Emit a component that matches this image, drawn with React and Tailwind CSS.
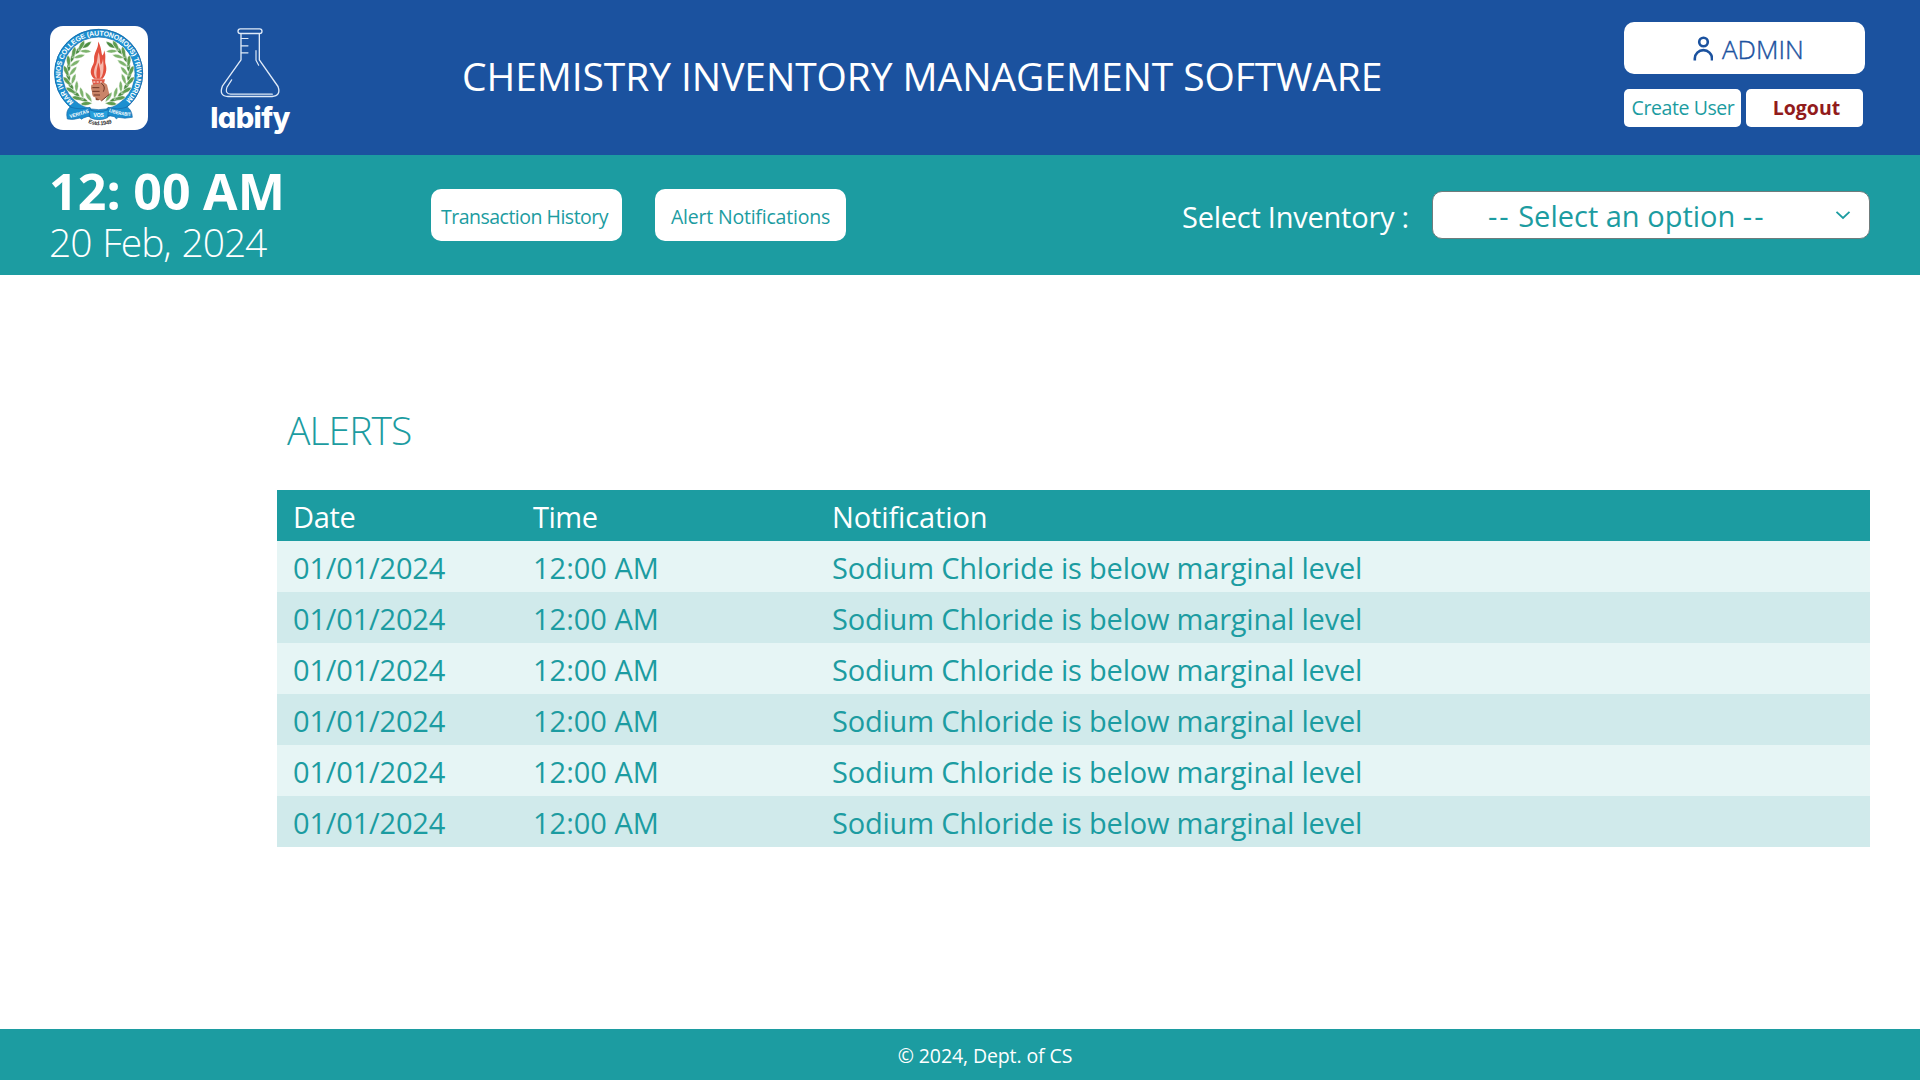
import React from "react";

const leafAngles = [22, 40, 58, 76, 94, 112, 130, 148];

function Leaf({ angle, side }) {
  return (
    <g transform={`rotate(${side * angle} 176 175) translate(176 265) scale(${side * 1.15} 1.15)`} fill="#5f9c50" stroke="#fff" strokeWidth="1">
      <path d="M12 -2 Q2 -20 -14 -20 Q-8 -4 12 -2 Z" fill="#7db36d" />
      <path d="M14 0 Q0 18 -14 14 Q-8 -2 14 0 Z" />
      <path d="M2 0 Q-14 -10 -28 2 Q-14 10 2 0 Z" fill="#4c8c42" />
    </g>
  );
}

function CollegeCrest() {
  return (
    <svg viewBox="30 33 294 312" className="h-[104px] w-[98px]">
      <defs>
        <path id="ring" d="M 97 266 A 120 120 0 1 1 257 264" />
        <path id="ribbonLeft" d="M 90 309 Q 118 303 150 291" />
        <path id="ribbonRight" d="M 206 290 Q 240 303 276 303" />
        <path id="estd" d="M 144 324 Q 180 338 220 323" />
      </defs>
      <circle cx="176" cy="175" r="133" fill="#1c8fd0" />
      <circle cx="176" cy="175" r="132" fill="none" stroke="#1b6fae" strokeWidth="3" />
      <circle cx="176" cy="175" r="109" fill="#fff" stroke="#1b6fae" strokeWidth="2" />
      {leafAngles.map((a) => (
        <React.Fragment key={a}>
          <Leaf angle={a} side={1} />
          <Leaf angle={a} side={-1} />
        </React.Fragment>
      ))}
      <text className="font-['Liberation_Sans'] font-bold" fontSize="21" fill="#fff" dy="6">
        <textPath href="#ring" textLength="572" lengthAdjust="spacing">
          MAR IVANIOS COLLEGE (AUTONOMOUS) TRIVANDRUM
        </textPath>
      </text>
      <path d="M164 210 L167 254 Q173 258 179 254 L184 210 Z" fill="#8a4a33" />
      <path d="M155 193 H195 L190 212 H160 Z" fill="#e05a48" />
      <path d="M160 201 H190" stroke="#fff" strokeWidth="3" strokeDasharray="6 4" />
      <g transform="translate(0 38.2) scale(1 0.8)">
        <path
          d="M162 191 C146 172 153 152 160 136 C165 122 160 112 164 100 C168 84 176 72 174 52 C184 70 183 90 187 104 C192 98 192 90 192 84 C200 104 193 122 197 138 C202 158 197 178 188 191 Z"
          fill="#e3513f"
        />
        <path d="M167 188 C158 170 163 152 169 136 C173 120 172 106 176 92 C181 112 179 126 182 140 C188 130 188 122 189 116 C191 140 193 166 183 188 Z" fill="#f6b9ad" />
        <path d="M171 189 C167 170 171 152 175 130 C181 154 183 170 179 189 Z" fill="#e3513f" />
      </g>
      <path d="M154 209 Q150 220 156 230 Q155 246 166 247 L184 258 L208 238 L201 209 Q190 198 176 206 Z" fill="#c98468" />
      <path d="M157 218 H178 M157 229 H179 M161 240 H180 M184 205 Q198 214 190 230 M184 258 L208 238" stroke="#6f3526" strokeWidth="3" fill="none" />
      <path d="M90 276 Q76 288 82 312 Q100 316 120 309 Q124 316 130 309 L158 299 L150 277 Q120 286 90 276 Z" fill="#1c8fd0" stroke="#1669a8" strokeWidth="2" />
      <path d="M262 276 Q276 286 277 307 Q254 312 234 307 Q229 316 224 305 L196 300 L204 277 Q232 286 262 276 Z" fill="#1c8fd0" stroke="#1669a8" strokeWidth="2" />
      <path d="M148 284 Q176 296 205 284 L203 308 Q176 320 150 308 Z" fill="#27a0dc" stroke="#1669a8" strokeWidth="2" />
      <g className="font-['Liberation_Sans'] font-bold" fontSize="15">
        <text fill="#fff">
          <textPath href="#ribbonLeft" textLength="60" lengthAdjust="spacingAndGlyphs">VERITAS</textPath>
        </text>
        <text x="176" y="307" textAnchor="middle" fill="#fff">VOS</text>
        <text fill="#fff">
          <textPath href="#ribbonRight" textLength="68" lengthAdjust="spacingAndGlyphs">LIBERABIT</textPath>
        </text>
        <text fill="#333" fontSize="17">
          <textPath href="#estd" textLength="74">Estd.1949</textPath>
        </text>
      </g>
    </svg>
  );
}

function Flask() {
  return (
    <svg viewBox="90 35 180 212" className="h-[71px] w-[60px]" fill="none" stroke="#dfeaf8" strokeWidth="4" strokeLinecap="round" strokeLinejoin="round">
      <rect x="144" y="40" width="72" height="14" rx="7" />
      <path d="M153 55 V133 L97 212 Q86 242 114 243 H246 Q274 241 264 213 L208 133 V55" />
      <path d="M154 69 H174 M154 91 H174 M154 112 H174" strokeWidth="3.5" />
      <path d="M198 105 V134 L206 149" strokeWidth="3.5" />
      <path d="M125 193 L111 215 Q104 235 122 236 H247" strokeWidth="3.5" />
    </svg>
  );
}

function Header() {
  return (
    <header className="flex h-[155px] bg-[#1b529f] pr-[55px] pl-[50px]">
      <div className="mt-[26px] h-[104px] w-[98px] overflow-hidden rounded-[13px] bg-white">
        <CollegeCrest />
      </div>
      <div className="ml-[52px] flex w-[100px] flex-col items-center pt-[27px]">
        <Flask />
        <div className="mt-[2px] h-9 font-['Inter'] text-[29px] leading-9 font-extrabold tracking-[-0.6px] text-white [font-feature-settings:'cv11'_1]">
          labify
        </div>
      </div>
      <h1 className="ml-[162px] pt-[50px] text-[39px] leading-[52px] tracking-[-0.08px] whitespace-nowrap text-white">
        CHEMISTRY INVENTORY MANAGEMENT SOFTWARE
      </h1>
      <div className="ml-auto w-[241px] pt-[22px]">
        <div className="flex h-[52px] items-center rounded-[10px] bg-white pl-[69px] text-[#1b529f]">
          <svg viewBox="0 0 20 26" className="h-[26px] w-5" fill="none" stroke="currentColor" strokeWidth="2.6">
            <circle cx="10.5" cy="7" r="4.3" />
            <path d="M1.8 25.5 V23.5 A8.6 8.4 0 0 1 19 23.5 V25.5" />
          </svg>
          <span className="ml-[9px] pt-px text-[26px] leading-9 font-light [-webkit-text-stroke:0.4px_currentColor]">ADMIN</span>
        </div>
        <div className="mt-[15px] flex gap-[5px]">
          <button className="h-[38px] w-[117px] rounded-[5px] bg-white pb-px pl-px text-[19.5px] leading-9 tracking-[-0.42px] whitespace-nowrap text-[#1c9ca1]">
            Create User
          </button>
          <button className="h-[38px] w-[117px] rounded-[5px] bg-white pb-px pl-1 text-[19.5px] leading-9 font-bold text-[#921b1b]">
            Logout
          </button>
        </div>
      </div>
    </header>
  );
}

function Toolbar() {
  return (
    <section className="flex h-[120px] bg-[#1c9ca1] pl-[49px] text-white">
      <div className="w-[382px] pt-[10px]">
        <div className="text-[50px] leading-[52px] font-bold tracking-[0.2px] [word-spacing:-1px]">12: 00 AM</div>
        <div className="text-[39px] leading-[50px] font-light tracking-[-1.1px] [word-spacing:2px]">20 Feb, 2024</div>
      </div>
      <div className="flex gap-[33px] pt-[34px] text-[19.5px] text-[#1c9ca1]">
        <button className="h-[52px] w-[191px] rounded-[10px] bg-white pt-[3px] pr-[4px] tracking-[-0.5px] whitespace-nowrap">
          Transaction History
        </button>
        <button className="h-[52px] w-[191px] rounded-[10px] bg-white pt-[3px] tracking-[-0.21px] whitespace-nowrap">
          Alert Notifications
        </button>
      </div>
      <div className="ml-auto flex pr-[50px] text-[29px]">
        <span className="w-[250px] pt-[41px] leading-[42px] tracking-[-0.24px] whitespace-nowrap">Select Inventory :</span>
        <div className="mt-9 flex h-12 w-[438px] items-center rounded-[10px] border border-[#6f7c7c] bg-white pr-[18px] pl-[55px] text-[#1c9ca1]">
          <span className="pt-[2px] leading-[42px] whitespace-nowrap">
            <span className="tracking-[2px]">--</span> Select an option <span className="tracking-[2px]">--</span>
          </span>
          <svg viewBox="0 0 16 10" className="ml-auto h-[10px] w-4" fill="none" stroke="currentColor" strokeWidth="1.8">
            <path d="M1.5 1.8 L8 8 L14.5 1.8" />
          </svg>
        </div>
      </div>
    </section>
  );
}

const alerts = Array.from({ length: 6 }, () => ({
  date: "01/01/2024",
  time: "12:00 AM",
  note: "Sodium Chloride is below marginal level",
}));

function AlertsTable() {
  return (
    <div className="w-[1593px] text-[29px] leading-[48px] text-[#1c9ca1]">
      <div className="grid h-[51px] grid-cols-[240px_299px_1fr] bg-[#1c9ca1] pt-[3px] pl-[16px] text-white">
        <span className="tracking-[-0.3px]">Date</span>
        <span className="tracking-[-0.5px]">Time</span>
        <span className="tracking-[-0.12px]">Notification</span>
      </div>
      {alerts.map((a, i) => (
        <div key={i} className="grid h-[51px] grid-cols-[240px_299px_1fr] pt-[3px] pl-[16px] odd:bg-[#d0eaeb] even:bg-[#e6f5f5]">
          <span className="tracking-[-0.18px]">{a.date}</span>
          <span>{a.time}</span>
          <span className="tracking-[-0.2px]">{a.note}</span>
        </div>
      ))}
    </div>
  );
}

export default function App() {
  return (
    <div className="flex h-[1080px] w-[1920px] flex-col overflow-hidden bg-white font-['Open_Sans','Noto_Sans',sans-serif]">
      <Header />
      <Toolbar />
      <main className="flex-1 pt-[129px] pl-[277px]">
        <h2 className="mb-[34px] pl-[10px] text-[39px] leading-[52px] font-light tracking-[-0.92px] text-[#1c9ca1]">ALERTS</h2>
        <AlertsTable />
      </main>
      <footer className="h-[51px] bg-[#1c9ca1] pt-[2px] pl-[50px] text-center text-[19.5px] leading-[50px] tracking-[-0.1px] text-white">
        © 2024, Dept. of CS
      </footer>
    </div>
  );
}
